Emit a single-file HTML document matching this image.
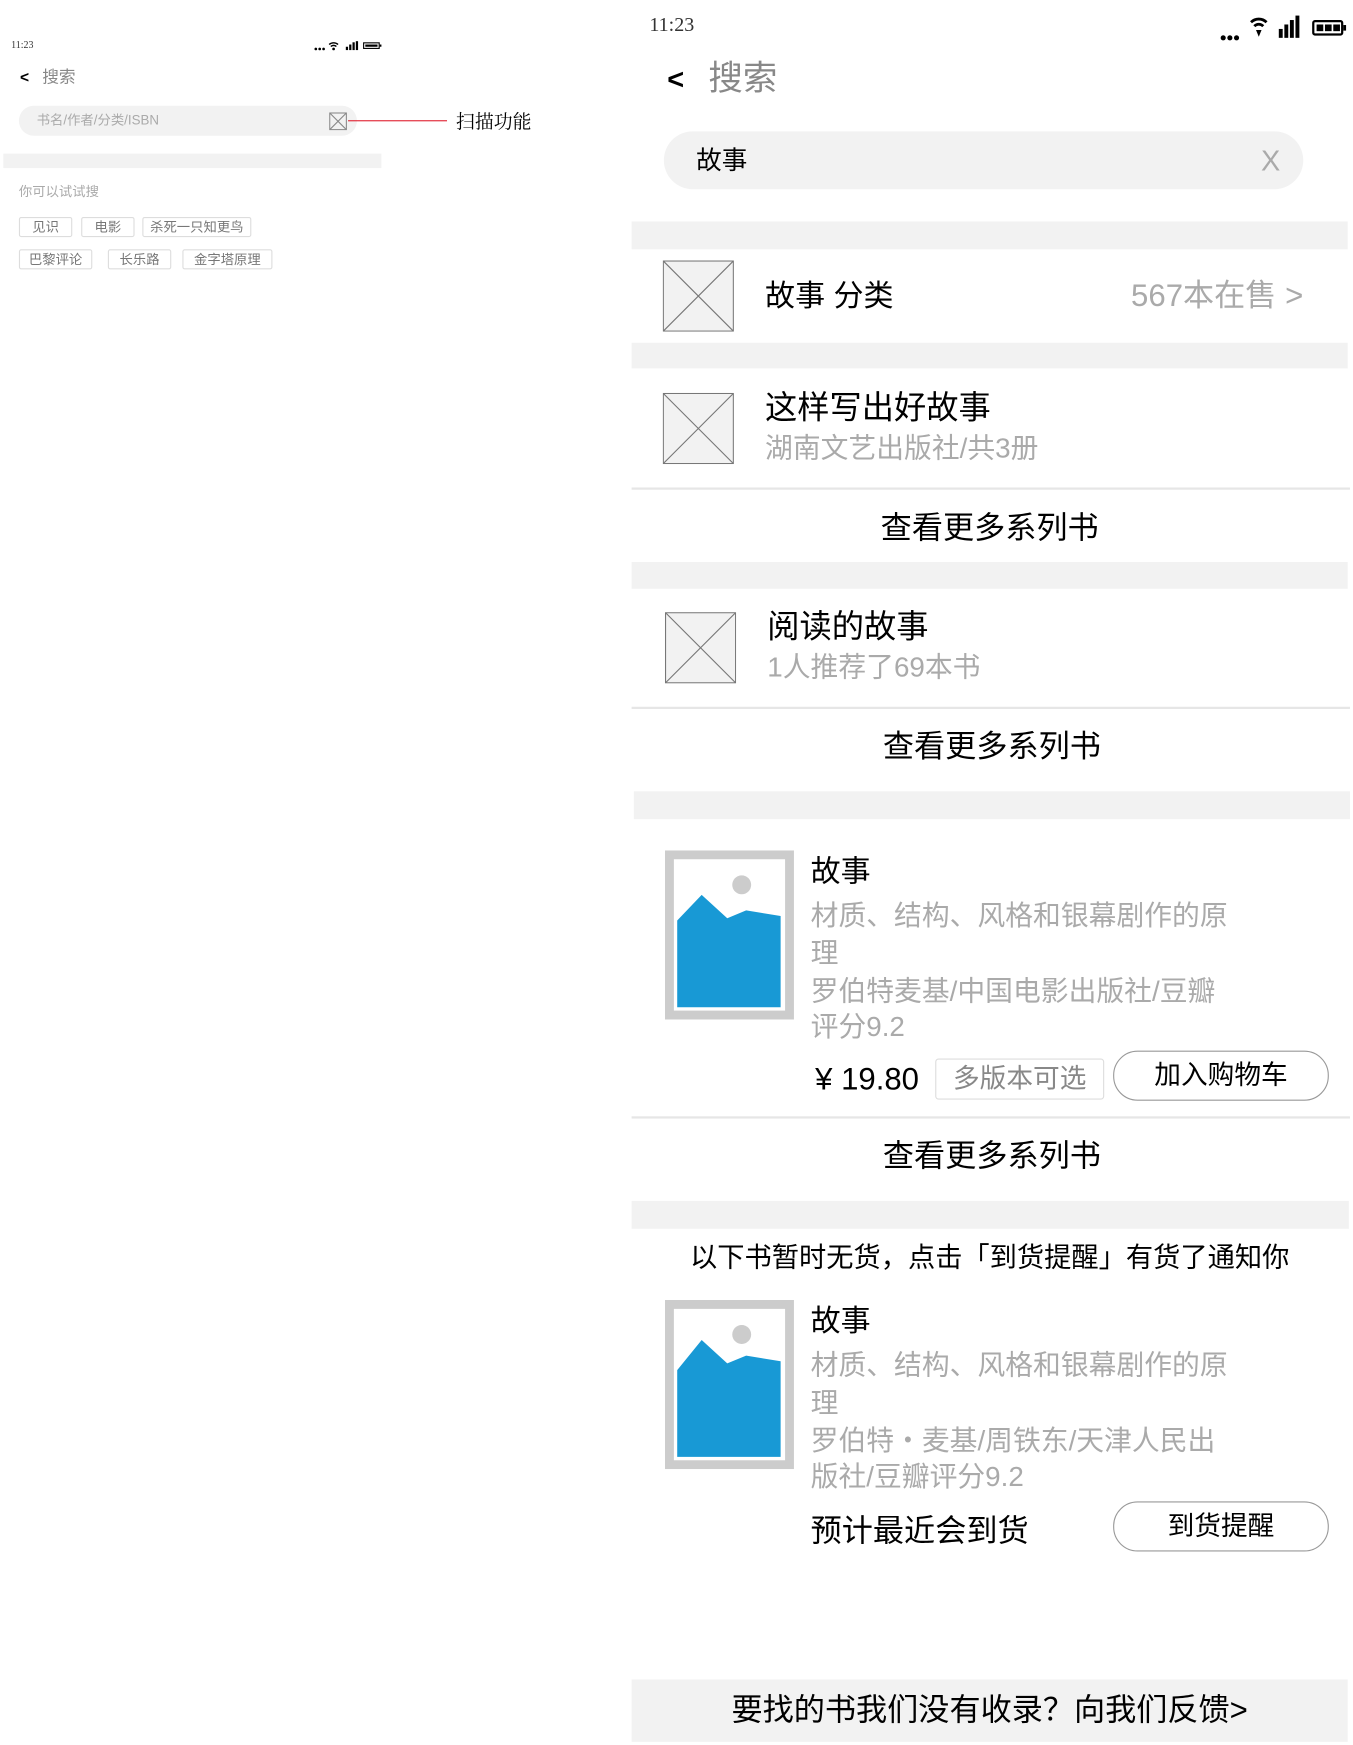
<!DOCTYPE html>
<html><head><meta charset="utf-8"><style>
html,body{margin:0;padding:0;background:#fff;width:1353px;height:1745px;overflow:hidden}
#w{position:absolute;left:0;top:0;width:1220px;height:1568px;transform:scale(1.112,1.113);transform-origin:0 0;font-family:"Liberation Sans","Noto Sans CJK SC",sans-serif}
.a{position:absolute;white-space:nowrap}
.t{position:absolute;white-space:nowrap;line-height:1}
.band{position:absolute;background:#f2f2f2}
.ln{position:absolute;height:2px;background:#e6e6e6}
.g{color:#aaa}
.tag{position:absolute;border:1px solid #ddd;font-size:12px;color:#777;text-align:center;line-height:16px;height:16px;border-radius:2px}
</style></head><body><div id="w">
<div class="t" style="left:10px;top:36px;font-size:9px;font-family:'Liberation Serif',serif;color:#333">11:23</div>
<svg class="a" style="left:282px;top:36px" width="62" height="10" viewBox="0 0 62 10"><circle cx="2" cy="8" r="1.2"/><circle cx="5.5" cy="8" r="1.2"/><circle cx="9" cy="8" r="1.2"/><path d="M14 4a6 6 0 0 1 8 0M15.5 5.8a3.5 3.5 0 0 1 5 0" stroke="#000" fill="none" stroke-width="1.3"/><circle cx="18" cy="8" r="1.2"/><rect x="29" y="6" width="2" height="3"/><rect x="32" y="4" width="2" height="5"/><rect x="35" y="2" width="2" height="7"/><rect x="38" y="1" width="2" height="8"/><rect x="45" y="2.5" width="14" height="5" fill="none" stroke="#000"/><rect x="46.5" y="4" width="11" height="2"/><rect x="59.5" y="4" width="1.5" height="2"/></svg>
<div class="t" style="left:18px;top:62px;font-size:14px;font-weight:bold">&lt;</div>
<div class="t" style="left:38px;top:62px;font-size:15px;color:#888">搜索</div>
<div class="a" style="left:17px;top:95px;width:304px;height:27px;border-radius:14px;background:#f2f2f2"></div>
<div class="t" style="left:33px;top:102px;font-size:12px;color:#aaa">书名/作者/分类/ISBN</div>
<svg class="a" style="left:296px;top:101px" width="16" height="16"><rect x="0.5" y="0.5" width="15" height="15" fill="#f2f2f2" stroke="#888"/><path d="M1 1L15 15M15 1L1 15" stroke="#888"/></svg>
<div class="a" style="left:313px;top:108px;width:89px;height:1px;background:#e02030"></div>
<div class="t" style="left:410px;top:101px;font-size:17px;font-family:'Liberation Serif','Noto Serif CJK SC',serif">扫描功能</div>
<div class="band" style="left:3px;top:138px;width:340px;height:13px"></div>
<div class="t" style="left:17px;top:166px;font-size:12px;color:#aaa">你可以试试搜</div>
<div class="tag" style="left:17px;top:195px;width:46px">见识</div>
<div class="tag" style="left:73px;top:195px;width:46px">电影</div>
<div class="tag" style="left:128px;top:195px;width:96px">杀死一只知更鸟</div>
<div class="tag" style="left:17px;top:224px;width:64px">巴黎评论</div>
<div class="tag" style="left:97px;top:224px;width:55px">长乐路</div>
<div class="tag" style="left:164px;top:224px;width:79px">金字塔原理</div>

<div class="t" style="left:584px;top:13px;font-size:18px;font-family:'Liberation Serif',serif;color:#333">11:23</div>
<svg class="a" style="left:1096px;top:12px" width="116" height="26" viewBox="0 0 116 26"><circle cx="4" cy="22" r="2.3"/><circle cx="10" cy="22" r="2.3"/><circle cx="16" cy="22" r="2.3"/><path d="M29 8a10 10 0 0 1 14 0M32 11.5a5.5 5.5 0 0 1 8 0" stroke="#000" fill="none" stroke-width="2.5"/><path d="M33.5 15h5l-2.5 6z"/><rect x="54" y="14" width="3.5" height="8"/><rect x="59" y="10" width="3.5" height="12"/><rect x="64" y="6" width="3.5" height="16"/><rect x="69" y="2" width="3.5" height="20"/><rect x="85" y="7" width="26" height="12" rx="1.5" fill="none" stroke="#000" stroke-width="2"/><rect x="88" y="10" width="6" height="6"/><rect x="95.5" y="10" width="6" height="6"/><rect x="103" y="10" width="6" height="6"/><rect x="112" y="10.5" width="2.5" height="5"/></svg>
<div class="t" style="left:600px;top:58px;font-size:26px;font-weight:bold">&lt;</div>
<div class="t" style="left:637px;top:55px;font-size:31px;color:#888">搜索</div>
<div class="a" style="left:597px;top:118px;width:575px;height:52px;border-radius:26px;background:#f2f2f2"></div>
<div class="t" style="left:626px;top:133px;font-size:23px">故事</div>
<div class="t" style="left:1134px;top:131px;font-size:26px;color:#aaa">X</div>

<div class="band" style="left:568px;top:199px;width:644px;height:25px"></div>
<svg class="a" style="left:596px;top:234px" width="64" height="64"><rect x="0.5" y="0.5" width="63" height="63" fill="#f2f2f2" stroke="#777"/><path d="M1 1L63 63M63 1L1 63" stroke="#777"/></svg>
<div class="t" style="left:688px;top:253px;font-size:27px">故事 分类</div>
<div class="t g" style="right:48px;top:252px;font-size:28px">567本在售 &gt;</div>

<div class="band" style="left:568px;top:308px;width:644px;height:23px"></div>
<svg class="a" style="left:596px;top:353px" width="64" height="64"><rect x="0.5" y="0.5" width="63" height="63" fill="#f2f2f2" stroke="#777"/><path d="M1 1L63 63M63 1L1 63" stroke="#777"/></svg>
<div class="t" style="left:688px;top:353px;font-size:29px">这样写出好故事</div>
<div class="t g" style="left:688px;top:391px;font-size:25px">湖南文艺出版社/共3册</div>
<div class="ln" style="left:568px;top:438px;width:646px"></div>
<div class="t" style="left:568px;width:644px;text-align:center;top:461px;font-size:28px">查看更多系列书</div>

<div class="band" style="left:568px;top:505px;width:644px;height:24px"></div>
<svg class="a" style="left:598px;top:550px" width="64" height="64"><rect x="0.5" y="0.5" width="63" height="63" fill="#f2f2f2" stroke="#777"/><path d="M1 1L63 63M63 1L1 63" stroke="#777"/></svg>
<div class="t" style="left:690px;top:550px;font-size:29px">阅读的故事</div>
<div class="t g" style="left:690px;top:588px;font-size:25px">1人推荐了69本书</div>
<div class="ln" style="left:568px;top:635px;width:646px"></div>
<div class="t" style="left:570px;width:644px;text-align:center;top:657px;font-size:28px">查看更多系列书</div>

<div class="band" style="left:570px;top:711px;width:644px;height:25px"></div>
<svg class="a" style="left:598px;top:764px" width="116" height="152"><rect width="116" height="152" fill="#ccc"/><rect x="8" y="8" width="100" height="136" fill="#fff"/><path d="M11 63L33 40L56 61L73 54L104 59V141H11Z" fill="#1899d5"/><circle cx="69" cy="31" r="8.5" fill="#ccc"/></svg>
<div class="t" style="left:729px;top:770px;font-size:27px">故事</div>
<div class="t g" style="left:729px;top:811px;font-size:25px">材质、结构、风格和银幕剧作的原</div>
<div class="t g" style="left:729px;top:845px;font-size:25px">理</div>
<div class="t g" style="left:729px;top:879px;font-size:25px">罗伯特麦基/中国电影出版社/豆瓣</div>
<div class="t g" style="left:729px;top:911px;font-size:25px">评分9.2</div>
<div class="t" style="left:733px;top:956px;font-size:28px">¥ 19.80</div>
<div class="a" style="left:841px;top:951px;width:150px;height:35px;border:1px solid #ddd;border-radius:3px;font-size:24px;color:#888;text-align:center;line-height:35px">多版本可选</div>
<div class="a" style="left:1001px;top:944px;width:192px;height:43px;border:1px solid #999;border-radius:22px;font-size:24px;text-align:center;line-height:43px">加入购物车</div>
<div class="ln" style="left:568px;top:1003px;width:646px"></div>
<div class="t" style="left:570px;width:644px;text-align:center;top:1025px;font-size:28px">查看更多系列书</div>

<div class="band" style="left:568px;top:1079px;width:645px;height:25px"></div>
<div class="t" style="left:568px;width:644px;text-align:center;top:1119px;font-size:24.5px">以下书暂时无货，点击「到货提醒」有货了通知你</div>
<svg class="a" style="left:598px;top:1168px" width="116" height="152"><rect width="116" height="152" fill="#ccc"/><rect x="8" y="8" width="100" height="136" fill="#fff"/><path d="M11 63L33 36L56 57L73 50L104 55V141H11Z" fill="#1899d5"/><circle cx="69" cy="31" r="8.5" fill="#ccc"/></svg>
<div class="t" style="left:729px;top:1174px;font-size:27px">故事</div>
<div class="t g" style="left:729px;top:1215px;font-size:25px">材质、结构、风格和银幕剧作的原</div>
<div class="t g" style="left:729px;top:1249px;font-size:25px">理</div>
<div class="t g" style="left:729px;top:1283px;font-size:25px">罗伯特・麦基/周铁东/天津人民出</div>
<div class="t g" style="left:729px;top:1315px;font-size:25px">版社/豆瓣评分9.2</div>
<div class="t" style="left:729px;top:1362px;font-size:28px">预计最近会到货</div>
<div class="a" style="left:1001px;top:1349px;width:192px;height:43px;border:1px solid #999;border-radius:22px;font-size:24px;text-align:center;line-height:43px">到货提醒</div>

<div class="band" style="left:568px;top:1509px;width:644px;height:56px"></div>
<div class="t" style="left:568px;width:644px;text-align:center;top:1523px;font-size:28px">要找的书我们没有收录？向我们反馈&gt;</div>
</div></body></html>
